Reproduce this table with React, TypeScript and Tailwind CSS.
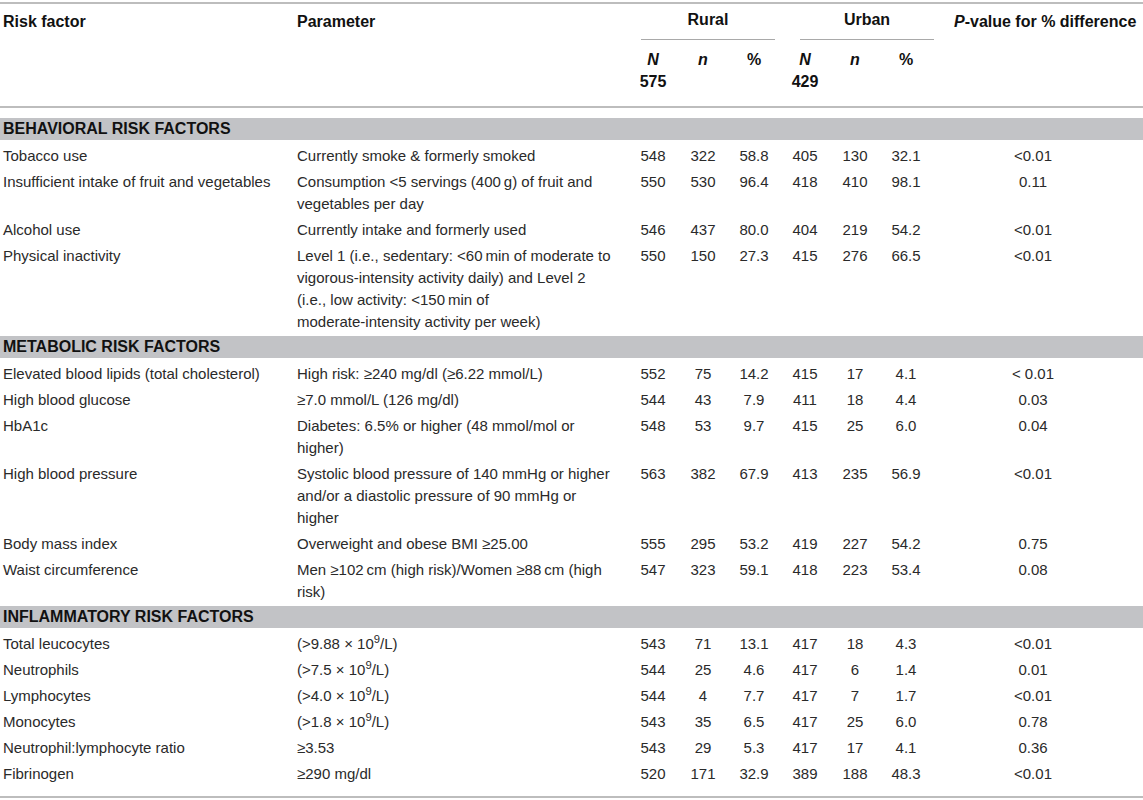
import type { ReactNode } from "react";

const cols = "grid grid-cols-[293px_335px_50px_50px_52px_50px_50px_52px_211px]";
const ts = "\u2009";

type Row = { factor: string; param: ReactNode[]; v: string[]; p: string };

const per = (a: string) => (
	<>
		(&gt;{a} × 10<sup>9</sup>/L)
	</>
);

const groups: { title: string; rows: Row[] }[] = [
	{
		title: "BEHAVIORAL RISK FACTORS",
		rows: [
			{
				factor: "Tobacco use",
				param: ["Currently smoke & formerly smoked"],
				v: ["548", "322", "58.8", "405", "130", "32.1"],
				p: "<0.01",
			},
			{
				factor: "Insufficient intake of fruit and vegetables",
				param: [`Consumption <5 servings (400${ts}g) of fruit and`, "vegetables per day"],
				v: ["550", "530", "96.4", "418", "410", "98.1"],
				p: "0.11",
			},
			{
				factor: "Alcohol use",
				param: ["Currently intake and formerly used"],
				v: ["546", "437", "80.0", "404", "219", "54.2"],
				p: "<0.01",
			},
			{
				factor: "Physical inactivity",
				param: [
					`Level 1 (i.e., sedentary: <60${ts}min of moderate to`,
					"vigorous-intensity activity daily) and Level 2",
					`(i.e., low activity: <150${ts}min of`,
					"moderate-intensity activity per week)",
				],
				v: ["550", "150", "27.3", "415", "276", "66.5"],
				p: "<0.01",
			},
		],
	},
	{
		title: "METABOLIC RISK FACTORS",
		rows: [
			{
				factor: "Elevated blood lipids (total cholesterol)",
				param: ["High risk: ≥240 mg/dl (≥6.22 mmol/L)"],
				v: ["552", "75", "14.2", "415", "17", "4.1"],
				p: "< 0.01",
			},
			{
				factor: "High blood glucose",
				param: ["≥7.0 mmol/L (126 mg/dl)"],
				v: ["544", "43", "7.9", "411", "18", "4.4"],
				p: "0.03",
			},
			{
				factor: "HbA1c",
				param: ["Diabetes: 6.5% or higher (48 mmol/mol or", "higher)"],
				v: ["548", "53", "9.7", "415", "25", "6.0"],
				p: "0.04",
			},
			{
				factor: "High blood pressure",
				param: [
					"Systolic blood pressure of 140 mmHg or higher",
					"and/or a diastolic pressure of 90 mmHg or",
					"higher",
				],
				v: ["563", "382", "67.9", "413", "235", "56.9"],
				p: "<0.01",
			},
			{
				factor: "Body mass index",
				param: ["Overweight and obese BMI ≥25.00"],
				v: ["555", "295", "53.2", "419", "227", "54.2"],
				p: "0.75",
			},
			{
				factor: "Waist circumference",
				param: [`Men ≥102${ts}cm (high risk)/Women ≥88${ts}cm (high`, "risk)"],
				v: ["547", "323", "59.1", "418", "223", "53.4"],
				p: "0.08",
			},
		],
	},
	{
		title: "INFLAMMATORY RISK FACTORS",
		rows: [
			{ factor: "Total leucocytes", param: [per("9.88")], v: ["543", "71", "13.1", "417", "18", "4.3"], p: "<0.01" },
			{ factor: "Neutrophils", param: [per("7.5")], v: ["544", "25", "4.6", "417", "6", "1.4"], p: "0.01" },
			{ factor: "Lymphocytes", param: [per("4.0")], v: ["544", "4", "7.7", "417", "7", "1.7"], p: "<0.01" },
			{ factor: "Monocytes", param: [per("1.8")], v: ["543", "35", "6.5", "417", "25", "6.0"], p: "0.78" },
			{
				factor: "Neutrophil:lymphocyte ratio",
				param: ["≥3.53"],
				v: ["543", "29", "5.3", "417", "17", "4.1"],
				p: "0.36",
			},
			{
				factor: "Fibrinogen",
				param: ["≥290 mg/dl"],
				v: ["520", "171", "32.9", "389", "188", "48.3"],
				p: "<0.01",
			},
		],
	},
];

function Group({ label, total, shift }: { label: string; total: string; shift: string }) {
	return (
		<div className="col-span-3 pt-[5px]">
			<div className={`${shift} w-[134px] text-center`}>{label}</div>
			<div className={`${shift} mt-[8px] h-px w-[134px] bg-[#a9a9a9]`} />
			<div className="mt-[9px] grid grid-cols-[50px_50px_52px]">
				<div className="text-center italic">N</div>
				<div className="text-center italic">n</div>
				<div className="text-center">%</div>
				<div className="text-center">{total}</div>
			</div>
		</div>
	);
}

function DataRow({ row }: { row: Row }) {
	return (
		<div className={`${cols} pt-[4px]`}>
			<div className="pl-[3px] whitespace-nowrap">{row.factor}</div>
			<div className="pl-[4px]">
				{row.param.map((l, i) => (
					<div key={i} className="whitespace-nowrap">
						{l}
					</div>
				))}
			</div>
			{row.v.map((x, i) => (
				<div key={i} className="text-center">
					{x}
				</div>
			))}
			<div className="pr-[9px] text-center">{row.p}</div>
		</div>
	);
}

export default function App() {
	return (
		<div className="h-[800px] w-[1143px] bg-white pt-[2px] font-['Liberation_Sans',Arial,sans-serif] text-[15px] leading-[22px] text-[#2a2a2a]">
			<div className="border-y-2 border-[#bdbdbd]">
				<div className={`${cols} h-[102px] text-[16px] font-bold text-[#111]`}>
					<div className="pt-[7px] pl-[3px]">Risk factor</div>
					<div className="pt-[7px] pl-[4px]">Parameter</div>
					<Group label="Rural" total="575" shift="ml-[13px]" />
					<Group label="Urban" total="429" shift="ml-[20px]" />
					<div className="pt-[7px] pl-[22px] whitespace-nowrap">
						<span className="italic">P</span>-value for % difference
					</div>
				</div>
			</div>

			<div className="mt-[10px]">
				{groups.map((g) => (
					<div key={g.title}>
						<div className="h-[22px] bg-[#c2c3c6] pl-[3px] text-[16px] font-bold leading-[22px] text-[#111]">
							{g.title}
						</div>
						<div className="pt-[1px] pb-[3px]">
							{g.rows.map((r) => (
								<DataRow key={r.factor} row={r} />
							))}
						</div>
					</div>
				))}
			</div>
			<div className="mt-[8px] h-[2px] bg-[#bdbdbd]" />
		</div>
	);
}
